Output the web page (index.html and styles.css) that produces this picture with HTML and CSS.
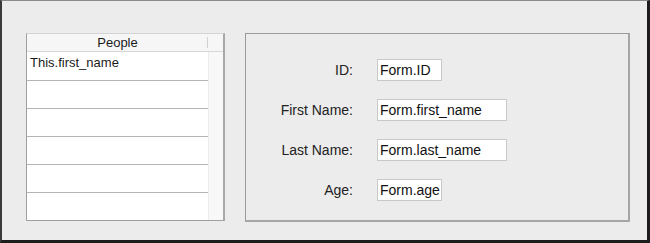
FILE: index.html
```html
<!DOCTYPE html>
<html>
<head>
<meta charset="utf-8">
<link rel="stylesheet" href="styles.css">
</head>
<body>
<div class="window">
  <div class="table">
    <div class="thead">
      <div class="th">People</div>
      <div class="th-gap"></div>
    </div>
    <div class="tbody">
      <div class="rows">
        <div class="row">This.first_name</div>
        <div class="row"></div>
        <div class="row"></div>
        <div class="row"></div>
        <div class="row"></div>
        <div class="row last"></div>
      </div>
      <div class="scroll"></div>
    </div>
  </div>
  <div class="panel">
    <div class="form">
      <label class="lbl">ID:</label><div class="field short">Form.ID</div>
      <label class="lbl">First Name:</label><div class="field long">Form.first_name</div>
      <label class="lbl">Last Name:</label><div class="field long">Form.last_name</div>
      <label class="lbl">Age:</label><div class="field short">Form.age</div>
    </div>
  </div>
</div>
</body>
</html>
```
FILE: styles.css
```css
* { box-sizing: border-box; }
html, body { margin: 0; padding: 0; background: #ececec; }
body { font-family: "Liberation Sans", Arial, sans-serif; color: #1a1a1a; }
.window {
  width: 650px;
  height: 243px;
  background: #ececec;
  border-top: 1px solid #8a8a8a;
  border-left: 2px solid #3a3a3a;
  border-right: 3px solid #1c1c1c;
  border-bottom: 3px solid #1c1c1c;
  display: flex;
  align-items: flex-start;
  padding: 32px 0 0 24px;
  gap: 20px;
}
.table {
  width: 199px;
  height: 188px;
  background: #fff;
  border-top: 1px solid #d4d4d4;
  border-left: 1px solid #a0a0a0;
  border-right: 2px solid #a8a8a8;
  border-bottom: 1px solid #a0a0a0;
  display: flex;
  flex-direction: column;
}
.thead {
  height: 18px;
  display: flex;
  background: #f6f6f6;
  border-bottom: 1px solid #d8d8d8;
}
.th {
  width: 181px;
  text-align: center;
  font-size: 13px;
  line-height: 17px;
  position: relative;
}
.th::after {
  content: "";
  position: absolute;
  right: 0;
  top: 3px;
  height: 11px;
  border-right: 1px solid #d0d0d0;
}
.th-gap { flex: 1; }
.tbody { flex: 1; display: flex; }
.rows { width: 181px; display: flex; flex-direction: column; }
.row {
  height: 28px;
  border-bottom: 1px solid #b4b4b4;
  font-size: 13px;
  line-height: 20px;
  padding: 1px 0 0 3px;
}
.row:first-child { height: 29px; }
.row.last { border-bottom: none; flex: 1; }
.scroll {
  flex: 1;
  background: #f8f8f8;
  border-left: 1px solid #ececec;
}
.panel {
  width: 385px;
  height: 189px;
  border-top: 1px solid #9a9a9a;
  border-left: 1px solid #9a9a9a;
  border-right: 2px solid #a6a6a6;
  border-bottom: 2px solid #a6a6a6;
  padding: 25px 0 0 0;
}
.form {
  display: grid;
  grid-template-columns: 107px auto;
  column-gap: 24px;
  row-gap: 18px;
  align-items: center;
  justify-items: start;
}
.lbl {
  justify-self: end;
  font-size: 14px;
  color: #222;
}
.field {
  height: 22px;
  background: #fff;
  border: 1px solid #c9c9c9;
  font-size: 14px;
  line-height: 20px;
  padding: 0 0 0 2px;
  color: #111;
}
.short { width: 65px; }
.long { width: 130px; }
```
